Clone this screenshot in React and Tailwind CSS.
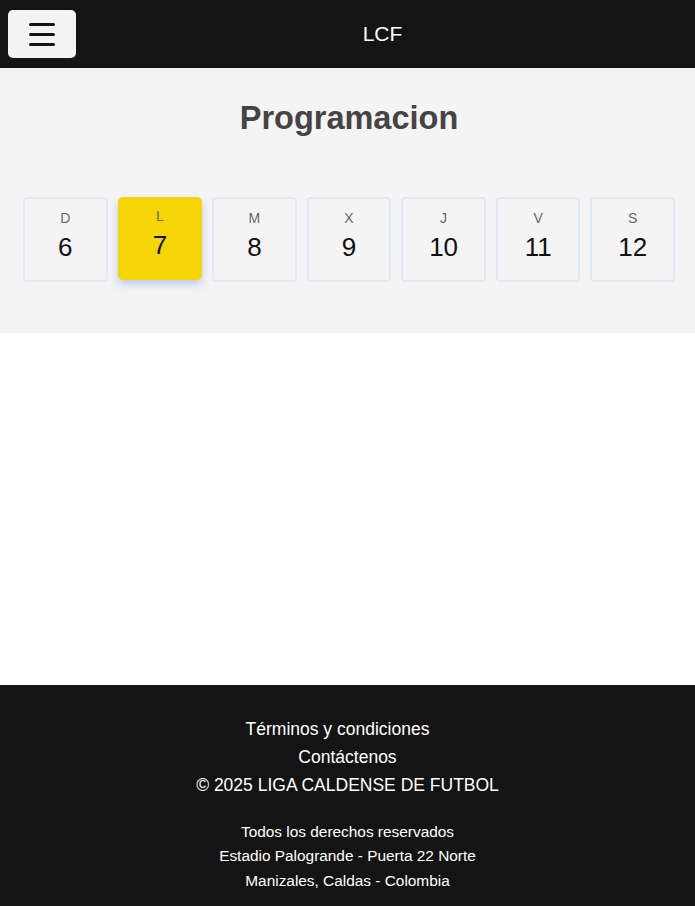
import React from "react";

const days = [
  ["D", "6"],
  ["L", "7"],
  ["M", "8"],
  ["X", "9"],
  ["J", "10"],
  ["V", "11"],
  ["S", "12"],
];

export default function App() {
  return (
    <div className="min-h-[906px] flex flex-col bg-white" style={{ fontFamily: '"Liberation Sans", Arial, sans-serif' }}>
      <header className="h-[68px] bg-[#141414] flex items-center px-2">
        <button className="w-[68px] h-[48px] rounded-[5px] bg-[#f4f4f4] flex flex-col items-center justify-center gap-[7px]">
          <span className="block w-[26px] h-[3px] rounded-full bg-[#141414]"></span>
          <span className="block w-[26px] h-[3px] rounded-full bg-[#141414]"></span>
          <span className="block w-[26px] h-[3px] rounded-full bg-[#141414]"></span>
        </button>
        <div className="flex-1 text-center text-white text-[21px] pl-[2px]">LCF</div>
      </header>

      <section className="bg-[#f4f4f4] pt-[30px] pb-[51px] pl-[23px] pr-[20px]">
        <h1 className="text-center font-bold text-[32.5px] leading-[40px] text-[#444444]">Programacion</h1>
        <div className="mt-[59px] flex gap-[10px]">
          {days.map(([d, n]) => {
            const sel = n === "7";
            return (
              <div
                key={n}
                className={
                  sel
                    ? "flex-1 h-[83px] rounded-[5px] bg-[#f5d506] border-2 border-[#f5d506] shadow-[0_4px_8px_rgba(80,120,220,0.35)] flex flex-col items-center pt-[7px]"
                    : "flex-1 h-[85px] rounded-[4px] border-2 border-[#dfe9f6] flex flex-col items-center pt-[9px]"
                }
              >
                <span className="text-[14px] leading-[20px] text-[#666666]">{d}</span>
                <span className="text-[26px] leading-[32px] text-[#111111] mt-[3px]">{n}</span>
              </div>
            );
          })}
        </div>
      </section>

      <div className="flex-1 bg-white"></div>

      <footer className="bg-[#141414] text-white text-center pt-[30px] pb-[13px]">
        <div className="text-[17.5px] leading-[28px]">
          <div><span className="mr-[20px]">Términos y condiciones</span></div>
          <div>Contáctenos</div>
          <div>© 2025 LIGA CALDENSE DE FUTBOL</div>
        </div>
        <div className="mt-[21px] text-[15.4px] leading-[24.5px]">
          <div>Todos los derechos reservados</div>
          <div>Estadio Palogrande - Puerta 22 Norte</div>
          <div>Manizales, Caldas - Colombia</div>
        </div>
      </footer>
    </div>
  );
}
